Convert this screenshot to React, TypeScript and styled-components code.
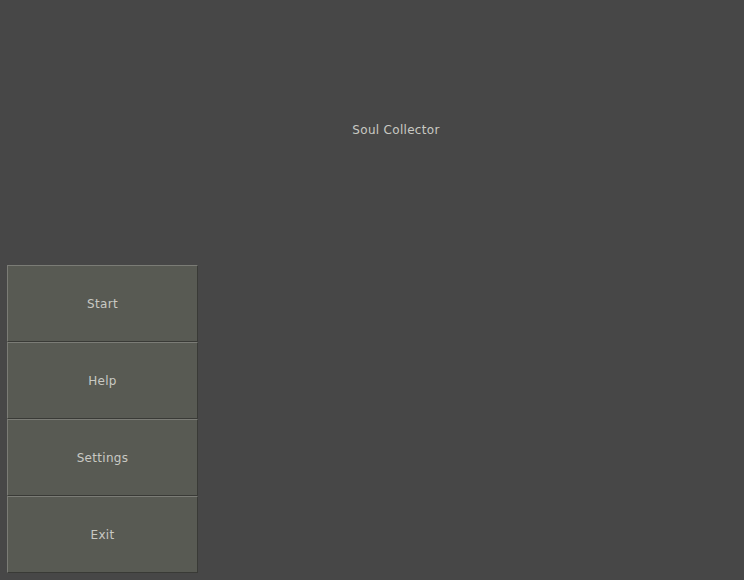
import styled, { createGlobalStyle } from 'styled-components';

const GlobalStyle = createGlobalStyle`
  html, body {
    margin: 0;
    padding: 0;
    background: #474747;
  }
  body {
    font-family: "DejaVu Sans", "Liberation Sans", sans-serif;
  }
`;

const Screen = styled.div`
  width: 744px;
  height: 580px;
  display: flex;
  flex-direction: column;
  background: #474747;
  overflow: hidden;
`;

const TitleBar = styled.div`
  height: 265px;
  display: flex;
  justify-content: center;
  padding-left: 48px;
  box-sizing: border-box;
`;

const Title = styled.div`
  margin-top: 122px;
  font-size: 12px;
  line-height: 16px;
  letter-spacing: 0.3px;
  color: #c9c9c3;
`;

const Menu = styled.div`
  display: flex;
  flex-direction: column;
  margin-left: 7px;
  width: 191px;
`;

const MenuButton = styled.button`
  height: 77px;
  width: 191px;
  box-sizing: border-box;
  background: #585a53;
  border-top: 1px solid #7b7c76;
  border-left: 1px solid #7b7c76;
  border-right: 1px solid #393a36;
  border-bottom: 1px solid #393a36;
  color: #c9c9c3;
  font-family: "DejaVu Sans", "Liberation Sans", sans-serif;
  font-size: 12px;
  letter-spacing: 0.3px;
  padding: 0;
  cursor: pointer;
`;

const items = ['Start', 'Help', 'Settings', 'Exit'];

export default function App() {
  return (
    <Screen>
      <GlobalStyle />
      <TitleBar>
        <Title>Soul Collector</Title>
      </TitleBar>
      <Menu>
        {items.map((label) => (
          <MenuButton key={label}>{label}</MenuButton>
        ))}
      </Menu>
    </Screen>
  );
}
